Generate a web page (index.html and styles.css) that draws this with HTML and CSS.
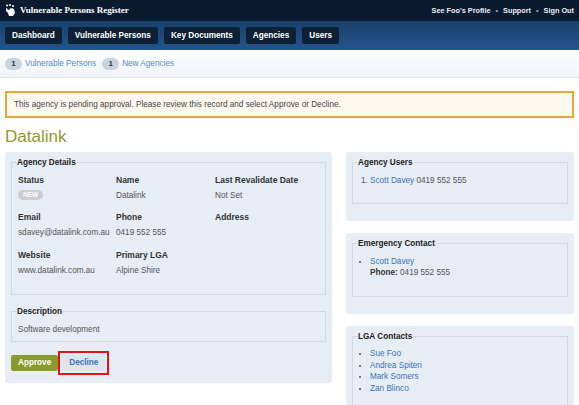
FILE: index.html
```html
<!DOCTYPE html>
<html lang="en">
<head>
    <meta charset="UTF-8">
    <title>Vulnerable Persons Register - Datalink</title>
    <link rel="stylesheet" href="styles.css">
</head>
<body>
    <div class="topbar">
        <div class="brand">
            <svg class="logo" width="11" height="13" viewBox="0 0 11 13">
                <circle cx="2" cy="1.5" r="1" fill="#fff"/>
                <circle cx="5" cy="1" r="1" fill="#fff"/>
                <circle cx="8" cy="2" r="1" fill="#fff"/>
                <path d="M1 4 L4 6 L6 4 L9 5 L10 9 L8 12 L4 12 L3 9 L1 7 Z" fill="#fff"/>
            </svg>
            <span class="brand-name">Vulnerable Persons Register</span>
        </div>
        <div class="user-links">
            <a href="#">See Foo's Profile</a>
            <span class="sep">&bull;</span>
            <a href="#">Support</a>
            <span class="sep">&bull;</span>
            <a href="#">Sign Out</a>
        </div>
    </div>

    <div class="navbar">
        <a class="nav-btn" href="#">Dashboard</a>
        <a class="nav-btn" href="#">Vulnerable Persons</a>
        <a class="nav-btn" href="#">Key Documents</a>
        <a class="nav-btn" href="#">Agencies</a>
        <a class="nav-btn" href="#">Users</a>
    </div>

    <div class="subbar">
        <span class="count">1</span><a href="#">Vulnerable Persons</a>
        <span class="count">1</span><a href="#">New Agencies</a>
    </div>

    <div class="content">
        <div class="alert">This agency is pending approval. Please review this record and select Approve or Decline.</div>

        <h1 class="page-title">Datalink</h1>

        <div class="columns">
            <div class="panel main-panel">
                <fieldset class="info">
                    <legend>Agency Details</legend>
                    <div class="details">
                        <div class="field">
                            <div class="label">Status</div>
                            <div class="value"><span class="badge">NEW</span></div>
                        </div>
                        <div class="field">
                            <div class="label">Name</div>
                            <div class="value">Datalink</div>
                        </div>
                        <div class="field">
                            <div class="label">Last Revalidate Date</div>
                            <div class="value">Not Set</div>
                        </div>
                        <div class="field">
                            <div class="label">Email</div>
                            <div class="value">sdavey@datalink.com.au</div>
                        </div>
                        <div class="field">
                            <div class="label">Phone</div>
                            <div class="value">0419 552 555</div>
                        </div>
                        <div class="field">
                            <div class="label">Address</div>
                            <div class="value"></div>
                        </div>
                        <div class="field">
                            <div class="label">Website</div>
                            <div class="value">www.datalink.com.au</div>
                        </div>
                        <div class="field">
                            <div class="label">Primary LGA</div>
                            <div class="value">Alpine Shire</div>
                        </div>
                    </div>
                </fieldset>

                <fieldset class="desc">
                    <legend>Description</legend>
                    <div class="value">Software development</div>
                </fieldset>

                <div class="actions">
                    <a class="btn btn-approve" href="#">Approve</a>
                    <span class="highlight"><a class="btn btn-decline" href="#">Decline</a></span>
                </div>
            </div>

            <div class="side">
                <div class="panel side-panel">
                    <fieldset>
                        <legend>Agency Users</legend>
                        <ol class="list">
                            <li><a href="#">Scott Davey</a> 0419 552 555</li>
                        </ol>
                    </fieldset>
                </div>

                <div class="panel side-panel">
                    <fieldset>
                        <legend>Emergency Contact</legend>
                        <ul class="list">
                            <li><a href="#">Scott Davey</a><br><strong>Phone:</strong> 0419 552 555</li>
                        </ul>
                    </fieldset>
                </div>

                <div class="panel side-panel">
                    <fieldset>
                        <legend>LGA Contacts</legend>
                        <ul class="list">
                            <li><a href="#">Sue Foo</a></li>
                            <li><a href="#">Andrea Spiteri</a></li>
                            <li><a href="#">Mark Somers</a></li>
                            <li><a href="#">Zan Blinco</a></li>
                        </ul>
                    </fieldset>
                </div>
            </div>
        </div>
    </div>
</body>
</html>
```

FILE: styles.css
```css
body {
    margin: 0;
    font-family: "Liberation Sans", Arial, sans-serif;
    font-size: 8.2px;
    line-height: 11.5px;
    color: #555;
    background: #fff;
}

a {
    color: #3a73b8;
    text-decoration: none;
}

/* top bar */
.topbar {
    height: 21px;
    background: #0b1b2f;
    display: flex;
    align-items: center;
    justify-content: space-between;
    padding: 0 5px;
}

.brand {
    display: flex;
    align-items: center;
    gap: 4px;
}

.brand-name {
    font-family: "Liberation Serif", "Times New Roman", serif;
    font-weight: bold;
    font-size: 9px;
    color: #fff;
}

.user-links {
    display: flex;
    align-items: center;
    gap: 5px;
    font-size: 7.3px;
    font-weight: bold;
}

.user-links a {
    color: #e8edf3;
}

.user-links .sep {
    color: #9aa8b8;
}

/* nav */
.navbar {
    height: 29px;
    background: linear-gradient(#1a406b, #22558c);
    display: flex;
    align-items: center;
    gap: 6px;
    padding: 0 5px;
}

.nav-btn {
    background: #0d2036;
    color: #fff;
    font-weight: bold;
    font-size: 8.2px;
    padding: 0 7px;
    height: 17px;
    line-height: 17px;
    border-radius: 2px;
}

/* sub bar */
.subbar {
    height: 28px;
    background: linear-gradient(#fff, #eef3f8);
    border-bottom: 1px solid #e2e9f1;
    display: flex;
    align-items: center;
    padding: 0 5px;
    box-sizing: border-box;
}

.subbar a {
    color: #5b88c4;
    margin: 0 6px 0 3px;
}

.count {
    display: inline-block;
    width: 17px;
    height: 12px;
    line-height: 12px;
    border-radius: 6px;
    background: #c9d3de;
    color: #333;
    font-weight: bold;
    text-align: center;
    font-size: 8px;
}

/* content */
.content {
    padding: 0 5px;
}

.alert {
    margin-top: 13px;
    border: 2px solid #e9a73b;
    background: #fdf8ef;
    color: #444;
    height: 23px;
    line-height: 23px;
    padding: 0 7px;
}

.page-title {
    margin: 9px 0 5px;
    font-size: 17px;
    font-weight: normal;
    color: #8a9c2c;
    height: 20px;
    line-height: 20px;
}

.columns {
    display: flex;
    gap: 14px;
    align-items: flex-start;
}

.panel {
    background: #e6edf5;
    border-radius: 3px;
    padding: 5px 6px 8px;
    box-sizing: border-box;
}

.main-panel {
    width: 327px;
}

.side {
    width: 228px;
    display: flex;
    flex-direction: column;
    gap: 12px;
}

fieldset {
    margin: 0;
    border: 1px solid #cfd9e5;
    padding: 6px 6px 17px;
}

legend {
    font-weight: bold;
    color: #222;
    padding: 0 1px 0 0;
    margin-left: -1px;
}

.details {
    display: grid;
    grid-template-columns: 98px 99px 1fr;
    row-gap: 11px;
}

.label {
    font-weight: bold;
    font-size: 8.5px;
    color: #333;
    margin-bottom: 3.5px;
}

.value {
    min-height: 11.5px;
}

.badge {
    display: inline-block;
    vertical-align: middle;
    background: #cbcdd0;
    color: #fff;
    font-size: 6.5px;
    font-weight: bold;
    border-radius: 5px;
    padding: 0 5px;
    height: 10px;
    line-height: 10px;
}

.info {
    padding-bottom: 18px;
}

.desc {
    margin-top: 11px;
    padding-bottom: 6px;
}

.actions {
    display: flex;
    align-items: center;
    margin-top: 9px;
}

.btn {
    display: inline-block;
    height: 16px;
    line-height: 16px;
    padding: 0 7px;
    font-weight: bold;
    border-radius: 2px;
}

.btn-approve {
    background: #8b9b2b;
    color: #fff;
}

.highlight {
    display: inline-block;
    border: 2px solid #e8121b;
    padding: 2px;
}

.btn-decline {
    background: #e1e4e8;
    color: #3a73b8;
}

.side-panel {
    padding-bottom: 17px;
}

.list {
    margin: 0;
    padding-left: 11px;
}

.list strong {
    color: #333;
}
```
